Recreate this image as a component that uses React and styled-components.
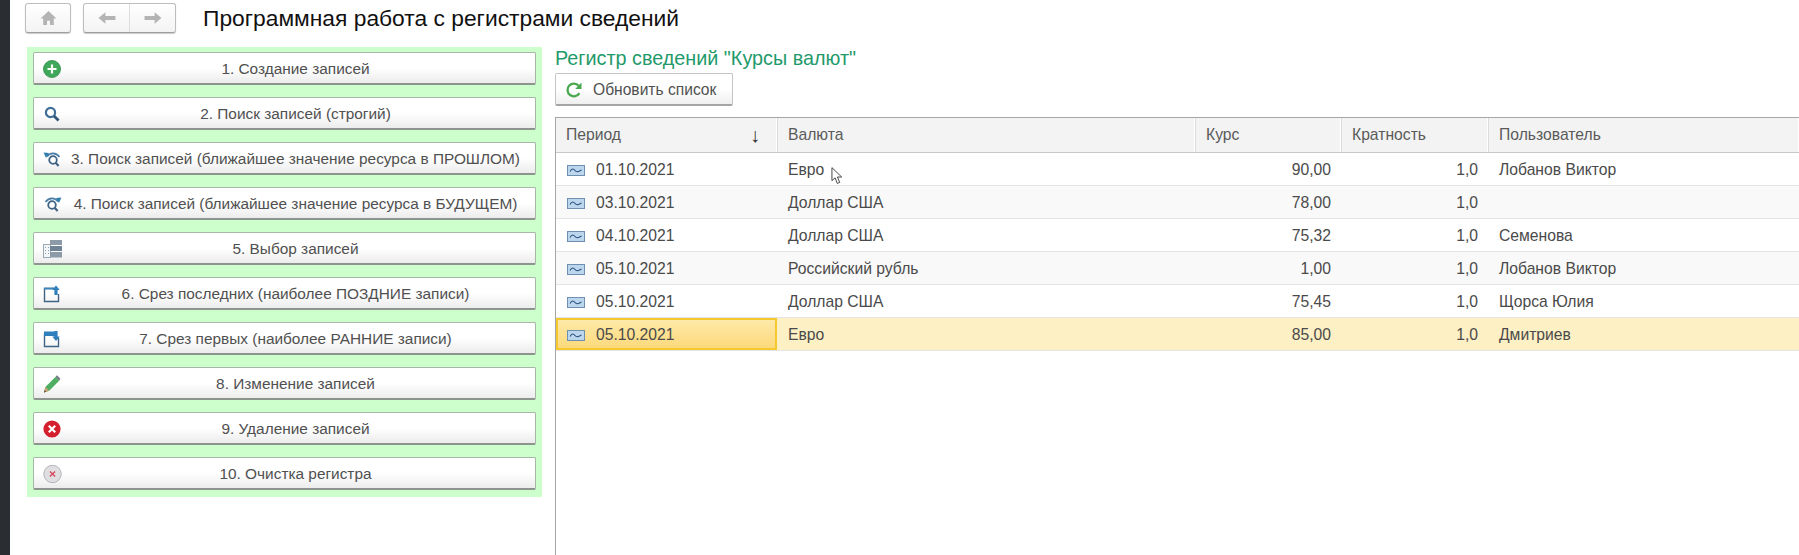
import React from 'react';
import styled, { createGlobalStyle } from 'styled-components';

const GlobalStyle = createGlobalStyle`
	html, body {
		margin: 0;
		height: 100%;
		overflow: hidden;
		background: #fff;
	}
	#root {
		height: 100%;
	}
`;

const PlusIcon = () => (
	<svg width='18' height='18' viewBox='0 0 18 18'>
		<circle cx='9' cy='9' r='8.5' fill='#3fa85a' />
		<circle cx='9' cy='9' r='8.5' fill='none' stroke='#2f8a48' strokeWidth='0.8' />
		<path d='M9 4.5v9M4.5 9h9' stroke='#fff' strokeWidth='2.2' />
	</svg>
);

const SearchIcon = () => (
	<svg width='18' height='18' viewBox='0 0 18 18' fill='none'>
		<circle cx='7.5' cy='7.5' r='4.6' stroke='#3f6f99' strokeWidth='2.2' />
		<path d='M11 11l4.6 4.6' stroke='#33587c' strokeWidth='2.8' />
	</svg>
);

const NearestPastIcon = () => (
	<svg width='19' height='18' viewBox='0 0 19 18' fill='none'>
		<path d='M4 6.5C7 2.2 13 2.2 16.5 7' stroke='#4a7ea6' strokeWidth='1.7' />
		<path d='M0.6 2.6l5.4 0.4-3 5z' fill='#2f7fae' />
		<circle cx='10' cy='10' r='3.8' stroke='#3f6485' strokeWidth='1.8' />
		<path d='M12.6 12.8l3 3.2' stroke='#3f6485' strokeWidth='2.2' />
	</svg>
);

const NearestFutureIcon = () => (
	<svg width='19' height='18' viewBox='0 0 19 18' fill='none'>
		<path d='M15 6.5C12 2.2 6 2.2 2.5 7' stroke='#4a7ea6' strokeWidth='1.7' />
		<path d='M18.4 2.6l-5.4 0.4 3 5z' fill='#2f7fae' />
		<circle cx='9' cy='10' r='3.8' stroke='#3f6485' strokeWidth='1.8' />
		<path d='M11.6 12.8l3 3.2' stroke='#3f6485' strokeWidth='2.2' />
	</svg>
);

const SelectIcon = () => (
	<svg width='20' height='20' viewBox='0 0 20 20' fill='none'>
		<rect x='0.5' y='5.5' width='7' height='13' fill='#f4f6f8' stroke='#9aa8b4' />
		<path d='M2 8.5h1M2 11.5h1M2 14.5h1M5 8.5h1M5 11.5h1M5 14.5h1' stroke='#8aa0b0' />
		<rect x='7' y='1' width='12' height='5' fill='#8d9aa8' />
		<rect x='7' y='7' width='12' height='5' fill='#6f8296' />
		<rect x='7' y='13' width='12' height='5.5' fill='#8d9aa8' />
	</svg>
);

const SliceLastIcon = () => (
	<svg width='18' height='18' viewBox='0 0 18 18' fill='none'>
		<path d='M11 3.5H1.5v13h14V9' stroke='#3f6485' strokeWidth='1.4' />
		<path d='M1 3.5h10' stroke='#3f86bd' strokeWidth='1.8' />
		<path d='M13 0.6l3.8 4.4h-2.2v5h-3.2V5H9.2z' fill='#2f7fbd' />
	</svg>
);

const SliceFirstIcon = () => (
	<svg width='18' height='18' viewBox='0 0 18 18' fill='none'>
		<path d='M1.5 3.5v13h14V8' stroke='#3f6485' strokeWidth='1.4' />
		<rect x='1' y='1.5' width='11' height='4.5' fill='#2f7fbd' />
		<path d='M13 11l3.8-4.4h-2.2v-5.6h-3.2v5.6H9.2z' fill='#2f7fbd' />
	</svg>
);

const PencilIcon = () => (
	<svg width='18' height='19' viewBox='0 0 18 19'>
		<path d='M1 18l1.4-5.4L12.4 2.4l3.8 3.8-10 10z' fill='#4fae62' />
		<path d='M12.4 2.4L14 0.8l3.4 3.4-1.2 2z' fill='#6f7c84' />
		<path d='M1 18l1.4-5.4 3.8 3.6z' fill='#c9a476' />
		<path d='M1 18l0.6-2.2 1.6 1.5z' fill='#5a4a3a' />
	</svg>
);

const DeleteIcon = () => (
	<svg width='18' height='18' viewBox='0 0 18 18'>
		<circle cx='9' cy='9' r='8.6' fill='#d4202e' />
		<path d='M5.8 5.8l6.4 6.4M12.2 5.8l-6.4 6.4' stroke='#fff' strokeWidth='2.2' />
	</svg>
);

const ClearIcon = () => (
	<svg width='19' height='19' viewBox='0 0 19 19'>
		<circle cx='9.5' cy='9.5' r='8.7' fill='#dfdfe2' stroke='#b4b4b8' />
		<path d='M6.9 6.9l5.2 5.2M12.1 6.9l-5.2 5.2' stroke='#d9485f' strokeWidth='1.4' />
	</svg>
);

const RefreshIcon = () => (
	<svg width='18' height='18' viewBox='0 0 17 17' fill='none'>
		<path d='M13.6 11.4A6 6 0 1 1 13 4.6' stroke='#4aa84f' strokeWidth='2.2' />
		<path d='M15.6 1.5v6h-6z' fill='#4aa84f' />
	</svg>
);

const RecordIcon = () => (
	<svg width='18' height='11' viewBox='0 0 18 11'>
		<rect x='0.5' y='0.5' width='17' height='10' fill='#bcd6ee' stroke='#6f8fb0' />
		<path d='M3 6.5C5 3 6.5 3.5 8 5.5S11 7 14.5 5' fill='none' stroke='#274f7c' strokeWidth='1.1' />
	</svg>
);

const HomeIcon = () => (
	<svg width='17' height='16' viewBox='0 0 16 15'>
		<path d='M8 1L0.5 8H3v6h3.6v-4h2.8v4H13V8h2.5z' fill='#b4b4b4' />
	</svg>
);

const ArrowIcon = ({ back }) => (
	<svg width='18' height='14' viewBox='0 0 17 13'>
		<path d={back ? 'M0.5 6.5L7 1v3.6h9.5v3.8H7V12z' : 'M16.5 6.5L10 1v3.6H0.5v3.8H10V12z'} fill='#b4b4b4' />
	</svg>
);

const actions = [
	{ label: '1. Создание записей', icon: <PlusIcon /> },
	{ label: '2. Поиск записей (строгий)', icon: <SearchIcon /> },
	{ label: '3. Поиск записей (ближайшее значение ресурса в ПРОШЛОМ)', icon: <NearestPastIcon /> },
	{ label: '4. Поиск записей (ближайшее значение ресурса в БУДУЩЕМ)', icon: <NearestFutureIcon /> },
	{ label: '5. Выбор записей', icon: <SelectIcon /> },
	{ label: '6. Срез последних (наиболее ПОЗДНИЕ записи)', icon: <SliceLastIcon /> },
	{ label: '7. Срез первых (наиболее РАННИЕ записи)', icon: <SliceFirstIcon /> },
	{ label: '8. Изменение записей', icon: <PencilIcon /> },
	{ label: '9. Удаление записей', icon: <DeleteIcon /> },
	{ label: '10. Очистка регистра', icon: <ClearIcon /> }
];

const rates = [
	{ period: '01.10.2021', currency: 'Евро', rate: '90,00', ratio: '1,0', user: 'Лобанов Виктор' },
	{ period: '03.10.2021', currency: 'Доллар США', rate: '78,00', ratio: '1,0', user: '' },
	{ period: '04.10.2021', currency: 'Доллар США', rate: '75,32', ratio: '1,0', user: 'Семенова' },
	{ period: '05.10.2021', currency: 'Российский рубль', rate: '1,00', ratio: '1,0', user: 'Лобанов Виктор' },
	{ period: '05.10.2021', currency: 'Доллар США', rate: '75,45', ratio: '1,0', user: 'Щорса Юлия' },
	{ period: '05.10.2021', currency: 'Евро', rate: '85,00', ratio: '1,0', user: 'Дмитриев' }
];

const App = () => (
	<Page>
		<GlobalStyle />
		<Strip />
		<Main>
			<TopBar>
				<NavGroup>
					<NavButton wide='44px'>
						<HomeIcon />
					</NavButton>
				</NavGroup>
				<NavGroup>
					<NavButton wide='45px'>
						<ArrowIcon back />
					</NavButton>
					<NavButton wide='45px' divided>
						<ArrowIcon />
					</NavButton>
				</NavGroup>
				<PageTitle>Программная работа с регистрами сведений</PageTitle>
			</TopBar>
			<Content>
				<ActionPanel>
					{actions.map(action => (
						<ActionButton key={action.label}>
							<ActionIcon>{action.icon}</ActionIcon>
							{action.label}
						</ActionButton>
					))}
				</ActionPanel>
				<ListSection>
					<SectionTitle>Регистр сведений "Курсы валют"</SectionTitle>
					<RefreshButton>
						<RefreshIcon />
						Обновить список
					</RefreshButton>
					<Table>
						<HeaderRow>
							<HeaderCell>
								Период
								<SortMark>↓</SortMark>
							</HeaderCell>
							<HeaderCell>Валюта</HeaderCell>
							<HeaderCell>Курс</HeaderCell>
							<HeaderCell>Кратность</HeaderCell>
							<HeaderCell>Пользователь</HeaderCell>
						</HeaderRow>
						{rates.map((row, idx) => {
							const selected = idx === rates.length - 1;
							return (
								<Row key={row.period + row.currency} odd={idx % 2 === 1} selected={selected}>
									<PeriodCell selected={selected}>
										<RecordIcon />
										{row.period}
									</PeriodCell>
									<Cell>
										{row.currency}
										{idx === 0 && (
											<Cursor viewBox='0 0 14 20' width='13' height='20'>
												<path
													d='M1 1v14l3.4-3 2.4 6 2.6-1.1-2.5-5.8H11.5z'
													fill='#fff'
													stroke='#3a3a3a'
												/>
											</Cursor>
										)}
									</Cell>
									<NumberCell>{row.rate}</NumberCell>
									<NumberCell>{row.ratio}</NumberCell>
									<Cell>{row.user}</Cell>
								</Row>
							);
						})}
					</Table>
				</ListSection>
			</Content>
		</Main>
	</Page>
);

const fontStack = '"Liberation Sans", Arial, sans-serif';
const gridColumns = '221px 418px 146px 147px 1fr';

const Page = styled.div`
	display: flex;
	height: 555px;
	width: 1799px;
	font-family: ${fontStack};
	overflow: hidden;
`;

const Strip = styled.div`
	width: 10px;
	flex-shrink: 0;
	background: #2a2e32;
`;

const Main = styled.div`
	flex: 1;
	min-width: 0;
	display: flex;
	flex-direction: column;
`;

const TopBar = styled.header`
	display: flex;
	align-items: center;
	height: 30px;
	margin: 3px 0 14px 15px;
`;

const NavGroup = styled.div`
	display: flex;
	height: 30px;
	margin-right: 12px;
	box-sizing: border-box;
	border: 1px solid #bdbdbd;
	border-bottom-color: #9e9e9e;
	border-radius: 3px;
	background: linear-gradient(#fff, #f3f3f3);
	box-shadow: 0 1px 1px rgba(0, 0, 0, 0.2);
`;

const NavButton = styled.div`
	display: flex;
	align-items: center;
	justify-content: center;
	width: ${props => props.wide};
	border-left: ${props => (props.divided ? '1px solid #dedede' : 'none')};
`;

const PageTitle = styled.h1`
	margin: 0 0 0 15px;
	font-size: 22.8px;
	font-weight: 400;
	color: #111;
	white-space: nowrap;
`;

const Content = styled.div`
	flex: 1;
	min-height: 0;
	display: flex;
	align-items: flex-start;
`;

const ActionPanel = styled.nav`
	width: 515px;
	height: 450px;
	margin-left: 17px;
	box-sizing: border-box;
	padding: 5px 6px;
	display: flex;
	flex-direction: column;
	gap: 12px;
	background: #ccffcc;
`;

const ActionButton = styled.div`
	position: relative;
	height: 33px;
	flex-shrink: 0;
	box-sizing: border-box;
	display: flex;
	align-items: center;
	justify-content: center;
	padding: 2px 0 0 22px;
	border: 1px solid #a9b5a9;
	border-bottom: 2px solid #8d948d;
	border-radius: 2px;
	background: linear-gradient(#fff 50%, #ececec);
	font-size: 15.4px;
	color: #505050;
	white-space: nowrap;
`;

const ActionIcon = styled.span`
	position: absolute;
	left: 9px;
	top: calc(50% + 1px);
	transform: translateY(-50%);
	display: flex;
`;

const ListSection = styled.section`
	flex: 1;
	min-width: 0;
	align-self: stretch;
	margin-left: 13px;
	display: flex;
	flex-direction: column;
`;

const SectionTitle = styled.h2`
	margin: 0;
	height: 26px;
	line-height: 22px;
	font-size: 19.8px;
	font-weight: 400;
	color: #1f9a6a;
	white-space: nowrap;
`;

const RefreshButton = styled.div`
	align-self: flex-start;
	width: 178px;
	height: 33px;
	box-sizing: border-box;
	display: flex;
	align-items: center;
	gap: 10px;
	padding: 1px 0 0 9px;
	border: 1px solid #c4c4c4;
	border-bottom: 2px solid #a5a5a5;
	border-radius: 2px;
	background: linear-gradient(#fff 50%, #efefef);
	font-size: 15.6px;
	color: #505050;
	white-space: nowrap;
`;

const Table = styled.div`
	flex: 1;
	margin-top: 11px;
	border-left: 1px solid #a6a6a6;
	border-top: 1px solid #a6a6a6;
	font-size: 15.7px;
	color: #4a4a4a;
`;

const HeaderRow = styled.div`
	display: grid;
	grid-template-columns: ${gridColumns};
	height: 34px;
	background: #f3f3f3;
	border-bottom: 1px solid #c9c9c9;
`;

const HeaderCell = styled.div`
	display: flex;
	align-items: center;
	justify-content: space-between;
	padding: 0 16px 0 10px;
	color: #5a5a5a;
	border-right: 1px solid #fff;
	border-left: 1px solid #dcdcdc;

	&:first-child {
		border-left: none;
	}
`;

const SortMark = styled.span`
	font-size: 20px;
	color: #333;
`;

const Row = styled.div`
	display: grid;
	grid-template-columns: ${gridColumns};
	height: 33px;
	box-sizing: border-box;
	border-bottom: 1px solid #e4e4e4;
	background: ${props => (props.selected ? '#fdf0c4' : props.odd ? '#f9f9f9' : '#fff')};
`;

const Cell = styled.div`
	position: relative;
	display: flex;
	align-items: center;
	padding: 2px 10px 0 11px;
	white-space: nowrap;
`;

const NumberCell = styled(Cell)`
	justify-content: flex-end;
`;

const PeriodCell = styled(Cell)`
	gap: 11px;
	padding-left: 11px;
	${props =>
		props.selected &&
		`
		box-sizing: border-box;
		border: 2px solid #f5c92e;
		padding: 2px 10px 0 9px;
		background: linear-gradient(#fde9a8, #fdd97c);
	`};
`;

const Cursor = styled.svg`
	position: absolute;
	left: 54px;
	top: 13px;
`;

export default App;
